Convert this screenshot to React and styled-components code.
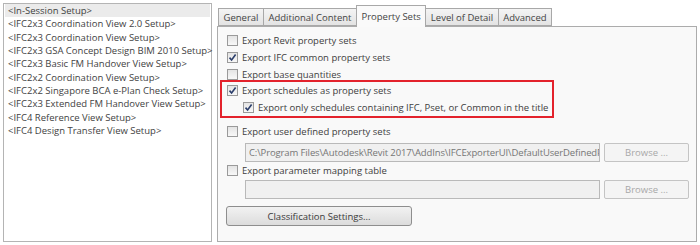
import React from 'react';
import styled, { createGlobalStyle } from 'styled-components';

const GlobalStyle = createGlobalStyle`
  html, body { margin: 0; padding: 0; background: #ffffff; }
  body { font-family: "Open Sans", "Noto Sans", sans-serif; font-size: 9.5px; color: #404040; }
`;

const setups = [
  '<In-Session Setup>',
  '<IFC2x3 Coordination View 2.0 Setup>',
  '<IFC2x3 Coordination View Setup>',
  '<IFC2x3 GSA Concept Design BIM 2010 Setup>',
  '<IFC2x3 Basic FM Handover View Setup>',
  '<IFC2x2 Coordination View Setup>',
  '<IFC2x2 Singapore BCA e-Plan Check Setup>',
  '<IFC2x3 Extended FM Handover View Setup>',
  '<IFC4 Reference View Setup>',
  '<IFC4 Design Transfer View Setup>',
];

const tabs = ['General', 'Additional Content', 'Property Sets', 'Level of Detail', 'Advanced'];

const Check = ({ checked }) => (
  <Box>
    {checked && (
      <svg width="9" height="9" viewBox="0 0 9 9">
        <path d="M1.5 4.6 L3.6 7 L7.6 1.6" fill="none" stroke="#2b3e6b" strokeWidth="1.6" />
      </svg>
    )}
  </Box>
);

const Option = ({ checked, indent, children }) => (
  <Row indent={indent}>
    <Check checked={checked} />
    <span>{children}</span>
  </Row>
);

const App = () => {
  return (
    <Container>
      <GlobalStyle />
      <SetupList>
        {setups.map((s, i) => (
          <SetupItem key={s} selected={i === 0}>{s}</SetupItem>
        ))}
      </SetupList>
      <Right>
        <TabBar>
          {tabs.map((t) => (
            <Tab key={t} active={t === 'Property Sets'}>{t}</Tab>
          ))}
        </TabBar>
        <Panel>
          <Option>Export Revit property sets</Option>
          <Option checked>Export IFC common property sets</Option>
          <Option>Export base quantities</Option>
          <Highlight>
            <Option checked>Export schedules as property sets</Option>
            <Option checked indent>Export only schedules containing IFC, Pset, or Common in the title</Option>
          </Highlight>
          <Option>Export user defined property sets</Option>
          <FileRow>
            <PathField>C:\Program Files\Autodesk\Revit 2017\AddIns\IFCExporterUI\DefaultUserDefinedP</PathField>
            <BrowseButton>Browse ...</BrowseButton>
          </FileRow>
          <Option>Export parameter mapping table</Option>
          <FileRow tight>
            <PathField />
            <BrowseButton>Browse ...</BrowseButton>
          </FileRow>
          <WideButton>Classification Settings...</WideButton>
        </Panel>
      </Right>
    </Container>
  );
};

export default App;

const Container = styled.div`
  display: flex;
  gap: 5px;
  padding: 3px;
  width: 700px;
  height: 245px;
  box-sizing: border-box;
`;

const SetupList = styled.div`
  width: 209px;
  height: 239px;
  box-sizing: border-box;
  border: 1px solid #b4b4b4;
  background: #fff;
  padding: 0 1px;
  display: flex;
  flex-direction: column;
`;

const SetupItem = styled.div`
  height: 13.35px;
  line-height: 13.35px;
  padding-left: 3px;
  white-space: nowrap;
  color: #424242;
  background: ${(p) => (p.selected ? '#ebebeb' : 'transparent')};
`;

const Right = styled.div`
  flex: 1;
  display: flex;
  flex-direction: column;
  padding-top: 2px;
`;

const TabBar = styled.div`
  display: flex;
  align-items: flex-end;
  padding-left: 2px;
  height: 21px;
`;

const Tab = styled.div`
  position: relative;
  box-sizing: border-box;
  height: ${(p) => (p.active ? '22px' : '18px')};
  margin-bottom: ${(p) => (p.active ? '-1px' : '0')};
  padding: 0 4.5px;
  margin-left: -1px;
  display: flex;
  align-items: center;
  border: 1px solid #a8a8a8;
  border-bottom: ${(p) => (p.active ? 'none' : '1px solid #a8a8a8')};
  background: ${(p) => (p.active ? '#fafafa' : 'linear-gradient(#f4f4f4, #e3e3e3)')};
  z-index: ${(p) => (p.active ? 2 : 1)};
  color: #444;
  white-space: nowrap;
`;

const Panel = styled.div`
  flex: 1;
  box-sizing: border-box;
  border: 1px solid #acacac;
  background: #f9f9f9;
  padding: 5px 7px 0 2px;
  display: flex;
  flex-direction: column;
`;

const Row = styled.div`
  display: flex;
  align-items: center;
  gap: 4px;
  height: 17px;
  padding-left: 7px;
  white-space: nowrap;
`;

const Box = styled.div`
  width: 11px;
  height: 11px;
  box-sizing: border-box;
  border: 1px solid #9a9a9a;
  background: linear-gradient(#e4e4e4, #f8f8f8);
  display: flex;
  align-items: center;
  justify-content: center;
`;

const Highlight = styled.div`
  width: 334px;
  box-sizing: border-box;
  border: 2px solid #e3222c;
  margin: -3px 0 5px;
  position: relative;
  & > div { padding-left: 5px; }
  & > div:nth-child(2) { padding-left: 21px; }
`;

const FileRow = styled.div`
  display: flex;
  gap: 4px;
  padding-left: 25px;
  margin: ${(p) => (p.tight ? '1px 0 7px' : '3px 0 0')};
`;

const PathField = styled.div`
  width: 355px;
  height: 19px;
  box-sizing: border-box;
  border: 1px solid #b9b9b9;
  background: #f0f0f0;
  color: #767676;
  padding: 0 3px;
  line-height: 17px;
  letter-spacing: -0.12px;
  overflow: hidden;
  white-space: nowrap;
`;

const BrowseButton = styled.div`
  width: 85px;
  height: 19px;
  box-sizing: border-box;
  border: 1px solid #c4c4c4;
  border-radius: 2px;
  background: #f4f4f4;
  color: #a8a8a8;
  display: flex;
  align-items: center;
  justify-content: center;
`;

const WideButton = styled.div`
  width: 186px;
  height: 20px;
  margin-left: 6px;
  box-sizing: border-box;
  border: 1px solid #8e8e8e;
  border-radius: 3px;
  background: linear-gradient(#f2f2f2, #dcdcdc);
  color: #3a3a3a;
  display: flex;
  align-items: center;
  justify-content: center;
`;
